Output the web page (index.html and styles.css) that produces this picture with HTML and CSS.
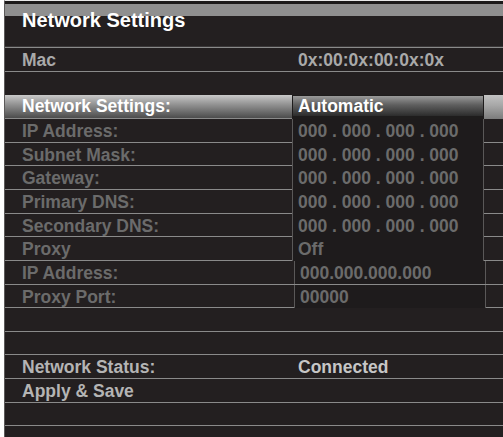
FILE: index.html
```html
<!DOCTYPE html>
<html lang="en">
<head>
    <meta charset="UTF-8">
    <meta name="viewport" content="width=device-width, initial-scale=1.0">
    <title>Network Settings</title>
    <link rel="stylesheet" href="styles.css">
</head>
<body>
    <div class="screen">
        <div class="title">
            <h1>Network Settings</h1>
        </div>

        <div class="row info">
            <span class="label">Mac</span>
            <span class="value">0x:00:0x:00:0x:0x</span>
        </div>
        <div class="row"></div>

        <!-- selected item -->
        <div class="row hl">
            <span class="label">Network Settings:</span>
            <span class="value box">Automatic</span>
            <span class="tail"></span>
        </div>

        <!-- disabled while automatic -->
        <div class="row dim">
            <span class="label">IP Address:</span>
            <span class="value box">000 . 000 . 000 . 000</span>
        </div>
        <div class="row dim">
            <span class="label">Subnet Mask:</span>
            <span class="value box">000 . 000 . 000 . 000</span>
        </div>
        <div class="row dim">
            <span class="label">Gateway:</span>
            <span class="value box">000 . 000 . 000 . 000</span>
        </div>
        <div class="row dim">
            <span class="label">Primary DNS:</span>
            <span class="value box">000 . 000 . 000 . 000</span>
        </div>
        <div class="row dim">
            <span class="label">Secondary DNS:</span>
            <span class="value box">000 . 000 . 000 . 000</span>
        </div>
        <div class="row dim">
            <span class="label">Proxy</span>
            <span class="value box">Off</span>
        </div>
        <div class="row dim">
            <span class="label">IP Address:</span>
            <span class="value box shift">000.000.000.000</span>
        </div>
        <div class="row dim">
            <span class="label">Proxy Port:</span>
            <span class="value box shift">00000</span>
        </div>

        <div class="row"></div>
        <div class="row"></div>
        <div class="row status">
            <span class="label">Network Status:</span>
            <span class="value">Connected</span>
        </div>
        <div class="row status">
            <span class="label">Apply &amp; Save</span>
        </div>
        <div class="row"></div>
        <div class="row"></div>
    </div>
</body>
</html>
```

FILE: styles.css
```css
body {
    margin: 0;
    background-color: #fff;
    font-family: "Liberation Sans", Arial, sans-serif;
    font-weight: bold;
}
.screen {
    margin-left: 4px;
    height: 437px;
    overflow: hidden;
    background-color: #231f20;
    border-left: 1px solid #5c5a5a;
    border-top: 1px solid #e8e8e8;
    box-sizing: border-box;
}
.title {
    height: 46.25px;
    box-sizing: border-box;
    border-top: 3px solid #1c1a1a;
    box-shadow: inset 0 12px 0 #8f8f8f;
    border-bottom: 1px solid #3a3738;
}
h1 {
    margin: 0;
    padding-left: 17px;
    font-size: 20px;
    line-height: 22px;
    padding-top: 5px;
    color: #fff;
}
.row {
    display: grid;
    grid-template-columns: 287px 192px 1fr;
    height: 23.625px;
    box-sizing: border-box;
    border-top: 1px solid #8a8a8a;
    font-size: 17.5px;
    line-height: 22.6px;
}
.label {
    padding-left: 17px;
    padding-top: 1px;
    white-space: nowrap;
}
.value {
    padding-left: 6px;
    padding-top: 1px;
    white-space: nowrap;
}
.info .label, .info .value {
    color: #a9a9a9;
}
.hl {
    border-top: none;
    line-height: 23.6px;
    background: linear-gradient(#c9c9c9, #9a9a9a 35%, #4c4c4c);
}
.hl .label {
    color: #fff;
    padding-top: 0;
}
.hl .box {
    color: #fff;
    padding-top: 0;
    border: 1px solid #1e1c1c;
    border-bottom-width: 3px;
    line-height: 20px;
    background: linear-gradient(#9a9a9a, #5e5e5e 45%, #2c2c2c);
}
.hl .tail {
    background: linear-gradient(#c2c2c2, #a6a6a6 45%, #7c7c7c);
}
.box {
    padding-left: 5px;
    border-left: 1px solid #5a5858;
    border-right: 1px solid #5a5858;
    background-color: #1e1b1c;
    box-sizing: border-box;
}
.shift {
    margin-left: 2px;
    margin-right: -2px;
}
.dim .label, .dim .value {
    color: #6b6b6b;
}
.status .label {
    color: #b4b4b4;
}
.status .value {
    color: #c6c6c6;
}
```
